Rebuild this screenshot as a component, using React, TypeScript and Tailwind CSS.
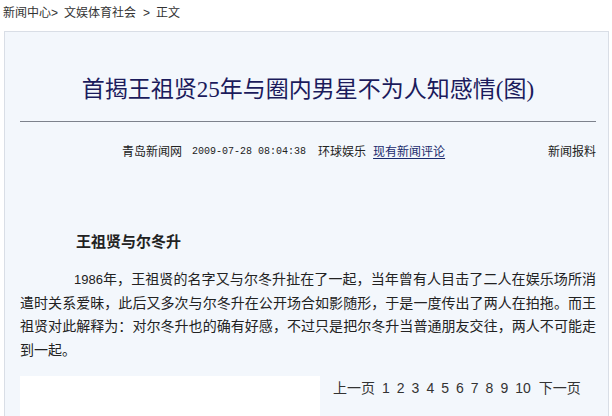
import React from "react";

const cjk = "font-['Liberation_Sans','Noto_Sans_CJK_SC',sans-serif]";

const lines = [
  "年，王祖贤的名字又与尔冬升扯在了一起，当年曾有人目击了二人在娱乐场所消",
  "遣时关系爱昧，此后又多次与尔冬升在公开场合如影随形，于是一度传出了两人在拍拖。而王",
  "祖贤对此解释为：对尔冬升也的确有好感，不过只是把尔冬升当普通朋友交往，两人不可能走",
  "到一起。",
];

const pages = ["1", "2", "3", "4", "5", "6", "7", "8", "9", "10"];

function Breadcrumb() {
  return (
    <div className="h-[31px] pl-[3px] pt-[5px] text-[12px] leading-[16px] text-[#333]">
      <span>新闻中心&gt;</span>
      <span className="ml-[6px]">文娱体育社会</span>
      <span className="ml-[7px]">&gt;</span>
      <span className="ml-[6px]">正文</span>
    </div>
  );
}

function MetaRow() {
  return (
    <div className="mt-[22px] flex items-center text-[12px] leading-[16px] text-[#222]">
      <div className="ml-[102px] flex items-center">
        <span>青岛新闻网</span>
        <span className="ml-[10px] font-['Liberation_Mono',monospace] text-[10px]">2009-07-28 08:04:38</span>
        <span className="ml-[12px]">环球娱乐</span>
        <a href="#" className="ml-[7px] text-[#1a2a6c] underline underline-offset-2">现有新闻评论</a>
      </div>
      <span className="ml-auto">新闻报料</span>
    </div>
  );
}

export default function App() {
  return (
    <div className={`h-[416px] w-[612px] overflow-hidden bg-white ${cjk}`}>
      <Breadcrumb />
      <div className="ml-[4px] h-[400px] w-[605px] border border-[#d9dee6] bg-[#f3f7fc] pl-[15px] pr-[12px]">
        <h1 className="pt-[43px] text-center font-['Liberation_Serif','Noto_Sans_CJK_SC',serif] text-[23px] font-normal leading-[30px] text-[#1b1b5c]">
          首揭王祖贤25年与圈内男星不为人知感情(图)
        </h1>
        <div className="mt-[16px] h-px bg-[#7d828c]" />
        <MetaRow />

        <h2 className="mt-[72px] pl-[56px] text-[15px] font-bold leading-[20px] text-[#222]">王祖贤与尔冬升</h2>

        <div className="mt-[16px] text-[14px] leading-[23.5px] text-[#222]">
          {lines.map((line, i) => (
            <p
              key={i}
              className={
                i === lines.length - 1
                  ? "text-left"
                  : i === 0
                  ? "whitespace-nowrap pl-[54px] text-justify [text-align-last:justify]"
                  : "text-justify [text-align-last:justify]"
              }
            >
              {i === 0 && <span className="text-[13px]">1986</span>}
              {line}
            </p>
          ))}
        </div>

        <div className="mt-[14px] flex items-start">
          <div className="h-[40px] w-[300px] bg-white" />
          <div className="ml-[13px] mt-[2px] flex items-center text-[14px] leading-[20px] text-[#333]">
            <span>上一页</span>
            {pages.map((p) => (
              <a key={p} href="#" className="ml-[7px] text-[#333]">
                {p}
              </a>
            ))}
            <span className="ml-[8px]">下一页</span>
          </div>
        </div>
      </div>
    </div>
  );
}
